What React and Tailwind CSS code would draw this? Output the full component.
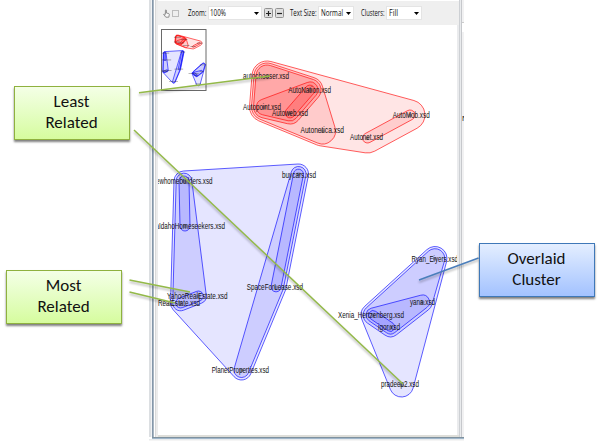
import { Fragment } from "react";

// Outline of a convex set of node centres, grown outwards by radius r.
function hullPath(pts, r) {
  const s = [...pts].sort((a, b) => a[0] - b[0] || a[1] - b[1]);
  const cross = (o, a, b) =>
    (a[0] - o[0]) * (b[1] - o[1]) - (a[1] - o[1]) * (b[0] - o[0]);
  const half = (list) => {
    const h = [];
    for (const p of list) {
      while (h.length >= 2 && cross(h[h.length - 2], h[h.length - 1], p) <= 0) h.pop();
      h.push(p);
    }
    h.pop();
    return h;
  };
  const hull = [...half(s), ...half([...s].reverse())];
  let d = "";
  hull.forEach((a, i) => {
    const b = hull[(i + 1) % hull.length];
    const len = Math.hypot(b[0] - a[0], b[1] - a[1]);
    const nx = ((b[1] - a[1]) / len) * r;
    const ny = (-(b[0] - a[0]) / len) * r;
    const start = `${(a[0] + nx).toFixed(2)} ${(a[1] + ny).toFixed(2)}`;
    d += i === 0 ? `M${start}` : `A${r} ${r} 0 0 1 ${start}`;
    d += `L${(b[0] + nx).toFixed(2)} ${(b[1] + ny).toFixed(2)}`;
    if (i === hull.length - 1) {
      const c = hull[0];
      const e = hull[1 % hull.length];
      const l = Math.hypot(e[0] - c[0], e[1] - c[1]);
      d += `A${r} ${r} 0 0 1 ${(c[0] + ((e[1] - c[1]) / l) * r).toFixed(2)} ${(c[1] - ((e[0] - c[0]) / l) * r).toFixed(2)}Z`;
    }
  });
  return d;
}

// x, y, label, label start, label end, baseline
const nodes = {
  chooser: [267, 76, "autochooser.xsd", 243, 289, 79],
  nation: [310, 90, "AutoNation.xsd", 288.3, 331, 93],
  point: [264.5, 107, "Autopoint.xsd", 243, 281, 110],
  web: [290, 113, "Autoweb.xsd", 272, 308, 116],
  netica: [322.5, 131, "Autonetica.xsd", 300.5, 344, 133],
  mob: [410, 115, "AutoMob.xsd", 392.7, 429.7, 118],
  net: [367.5, 138, "Autonet.xsd", 350, 383, 140],
  builders: [184, 181, "newhomebuilders.xsd", 152.5, 212.5, 184],
  idaho: [185, 226, "aIdahoHomeseekers.xsd", 155.5, 225, 228.7],
  buycars: [298.5, 174, "buycars.xsd", 282, 316, 178],
  yahoo: [198.5, 296, "YahooRealEstate.xsd", 167, 227.5, 299],
  real: [180.5, 303, "RealEstate.xsd", 158, 200, 306],
  space: [276, 287, "SpaceForLease.xsd", 246.7, 303, 289.7],
  planet: [241.5, 370, "PlanetProperties.xsd", 211.7, 269, 372.5],
  ryan: [435, 258.5, "Ryan_Eiyers.xsd", 411.5, 458, 262],
  yana: [422.5, 302, "yana.xsd", 410, 435, 305],
  xenia: [373, 315, "Xenia_Hertzenberg.xsd", 338, 404, 317.7],
  igor: [390.5, 327, "igor.xsd", 378, 400, 330],
  pradeep: [401.5, 385, "pradeep2.xsd", 381, 419, 387],
};

const RED = "#ff0000";
const BLUE = "#0000ff";

const clusters = [
  [RED, 15, "chooser nation point web netica mob net", 0.1],
  [RED, 13, "chooser nation point web netica", 0.11],
  [RED, 11, "chooser nation point web", 0.17],
  [RED, 8, "nation point web", 0.12],
  [RED, 5, "nation web", 0.14],
  [RED, 5, "mob net", 0.1],
  [BLUE, 10, "builders idaho buycars yahoo real space planet", 0.1],
  [BLUE, 7.8, "builders idaho yahoo real", 0.1],
  [BLUE, 5, "builders idaho", 0.1],
  [BLUE, 5, "yahoo real", 0.1],
  [BLUE, 7.5, "buycars space planet", 0.1],
  [BLUE, 5, "buycars space", 0.1],
  [BLUE, 12, "ryan yana xenia igor pradeep", 0.1],
  [BLUE, 9.8, "ryan yana xenia igor", 0.1],
  [BLUE, 7, "yana xenia igor", 0.1],
  [BLUE, 4.5, "xenia igor", 0.1],
];

function Clusters({ thin }) {
  return clusters.map(([color, r, names, alpha]) => (
    <path
      key={names + r}
      d={hullPath(names.split(" ").map((n) => nodes[n].slice(0, 2)), r)}
      fill={color}
      fillOpacity={alpha}
      stroke={color}
      strokeOpacity={thin ? 0.85 : 0.7}
      strokeWidth={thin ? 0.7 : 0.9}
      vectorEffect="non-scaling-stroke"
    />
  ));
}

function Canvas() {
  return (
    <svg className="block h-[410px] w-[299px] shrink-0 bg-white" viewBox="158 25 299 410">
      <Clusters />
      {Object.entries(nodes).map(([key, [x, y, label, x1, x2, base]]) => (
        <Fragment key={key}>
          <rect x={x - 2} y={y - 1.5} width="4" height="3.6" rx="1" fill="#333a44" opacity="0.4" />
          <text
            x={x1}
            y={base}
            textLength={x2 - x1}
            lengthAdjust="spacingAndGlyphs"
            fontFamily="'Liberation Sans', Arial, sans-serif"
            fontSize="8.6"
            fill="#111"
          >
            {label}
          </text>
        </Fragment>
      ))}
      <rect x="161.5" y="29.5" width="44.5" height="61" fill="#fff" stroke="#6a6a6a" />
      <g transform="translate(136.5 25.8) scale(0.154 0.151)">
        <Clusters thin />
        {Object.entries(nodes).map(([key, [, y, , x1, x2]]) => (
          <path key={key} d={`M${Math.max(x1, 166)} ${y}H${Math.min(x2, 448)}`} stroke="#222" strokeWidth="4" opacity="0.6" />
        ))}
      </g>
    </svg>
  );
}

function Label({ text, width }) {
  return (
    <svg className="block h-[14px] shrink-0 overflow-visible" width={width} viewBox={`0 0 ${width} 14`}>
      <text
        x="0"
        y="10"
        textLength={width}
        lengthAdjust="spacingAndGlyphs"
        fontFamily="'Open Sans', sans-serif"
        fontSize="8.8"
        fill="#111"
      >
        {text}
      </text>
    </svg>
  );
}

function Select({ text, textWidth, className }) {
  return (
    <div className={`flex h-[14px] shrink-0 items-center justify-between border border-[#e4e4e4] bg-white pr-[2px] pl-[1.5px] ${className}`}>
      <Label text={text} width={textWidth} />
      <svg className="block h-[3px] w-[5px]" viewBox="0 0 5 3">
        <path d="M0 0H5L2.5 3Z" fill="#000" />
      </svg>
    </div>
  );
}

function StepButton({ plus }) {
  return (
    <div className="flex h-[10px] w-[9px] shrink-0 items-center justify-center rounded-[1.5px] border border-[#929292] bg-[#dedede]">
      <svg className="block h-[7px] w-[7px] shrink-0" viewBox="0 0 7 7">
        <path d={plus ? "M1 3.5H6M3.5 1V6" : "M1 3.5H6"} stroke="#222" strokeWidth="1.2" />
      </svg>
    </div>
  );
}

function Toolbar() {
  return (
    <div className="flex h-6 items-center bg-[#efefef] pl-[5px]">
      <svg className="mr-[2px] block h-[9px] w-[7px] shrink-0" viewBox="0 0 7 9">
        <path
          d="M2.4 5.4V1.2Q2.9.3 3.4 1.2V4L5.8 4.6Q6.4 4.8 6.3 5.6L5.8 8.2H2.8L.6 5.4Q.9 4.6 2.4 5.8"
          fill="#f8f8f8"
          stroke="#777"
          strokeWidth="0.8"
        />
      </svg>
      <div className="mr-[8.5px] h-[7px] w-[7px] shrink-0 border border-[#bcbcbc]" />
      <Label text="Zoom:" width={18.5} />
      <Select text="100%" textWidth={16} className="ml-[1.5px] w-[54px]" />
      <div className="ml-[2px] flex gap-[2px]">
        <StepButton plus />
        <StepButton />
      </div>
      <div className="ml-[6.5px] flex items-center gap-[1.5px]">
        <Label text="Text Size:" width={26.5} />
        <Select text="Normal" textWidth={22} className="w-[36px]" />
      </div>
      <div className="ml-[7px] flex items-center gap-[1.5px]">
        <Label text="Clusters:" width={23.5} />
        <Select text="Fill" textWidth={9} className="w-[36px]" />
      </div>
    </div>
  );
}

function Callout({ lines, className }) {
  return (
    <div
      className={`absolute flex h-[54px] w-[116px] flex-col items-center justify-center border bg-linear-to-b pb-[2px] text-center font-['Carlito','Lato',sans-serif] text-[17px] leading-[21px] text-[#111] shadow-[0_2px_2px_rgba(0,0,0,0.5)] ${className}`}
    >
      {lines.map((line) => (
        <div key={line}>{line}</div>
      ))}
    </div>
  );
}

function Connectors() {
  const green = ["M139 92.7L270 76", "M134 130L403 384", "M129.5 280L190 292", "M129.5 292L175 303"];
  return (
    <svg className="absolute inset-0 h-[442px] w-[600px] drop-shadow-[0_2px_1px_rgba(0,0,0,0.3)]" viewBox="0 0 600 442" fill="none" strokeWidth="1.5">
      {green.map((d) => (
        <path key={d} d={d} stroke="#93b948" />
      ))}
      <path d="M478.5 258L419 280" stroke="#4a7ebb" />
    </svg>
  );
}

export default function App() {
  return (
    <div className="relative h-[442px] w-[600px] overflow-hidden bg-white">
      <div className="ml-[149px] flex h-[441px] w-[315px] flex-col">
        <div className="flex h-[437px]">
          <div className="w-[2px] bg-[#dcdfe2]" />
          <div className="w-px bg-[#f1f3f5]" />
          <div className="w-px bg-[#8497aa]" />
          <div className="w-px bg-[#a9b6c2]" />
          <div className="w-px bg-white" />
          <div className="w-px bg-[#d9d9d9]" />
          <div className="w-[2px] bg-[#ececec]" />
          <div className="flex w-[301px] flex-col pt-px">
            <Toolbar />
            <div className="flex h-[410px]">
              <Canvas />
              <div className="w-[2px] bg-[#eaebed]" />
            </div>
            <div className="h-[2px] bg-[#deded9]" />
          </div>
          <div className="w-px bg-[#cdd0d4]" />
          <div className="w-px bg-[#e9ebed]" />
          <div className="w-px bg-[#c6c8cc]" />
          <div className="flex w-[2px] flex-col overflow-hidden bg-[#f1f1f2] pt-[22px]">
            <div className="h-[10px] shrink-0 border-t border-[#ccc] bg-white" />
            <div className="mt-[82px] h-[10px] font-['Liberation_Sans',sans-serif] text-[8px] leading-[10px] text-[#222]">N</div>
          </div>
        </div>
        <div className="ml-[3px] h-px bg-[#7f929f]" />
        <div className="ml-[3px] h-px bg-[#a0b6ca]" />
        <div className="h-px bg-[#e8ebed]" />
        <div className="h-px bg-[#f5f5f5]" />
      </div>
      <Connectors />
      <Callout
        lines={["Least", "Related"]}
        className="top-[85.5px] left-[13.5px] border-[#8fb13f] from-[#f4ffe6] to-[#d6fc9e]"
      />
      <Callout
        lines={["Most", "Related"]}
        className="top-[269.5px] left-[5.5px] border-[#8fb13f] from-[#f4ffe6] to-[#d6fc9e]"
      />
      <Callout
        lines={["Overlaid", "Cluster"]}
        className="top-[243px] left-[478.5px] border-[#3f78b8] from-[#e4eeff] to-[#a3c2ff]"
      />
    </div>
  );
}
